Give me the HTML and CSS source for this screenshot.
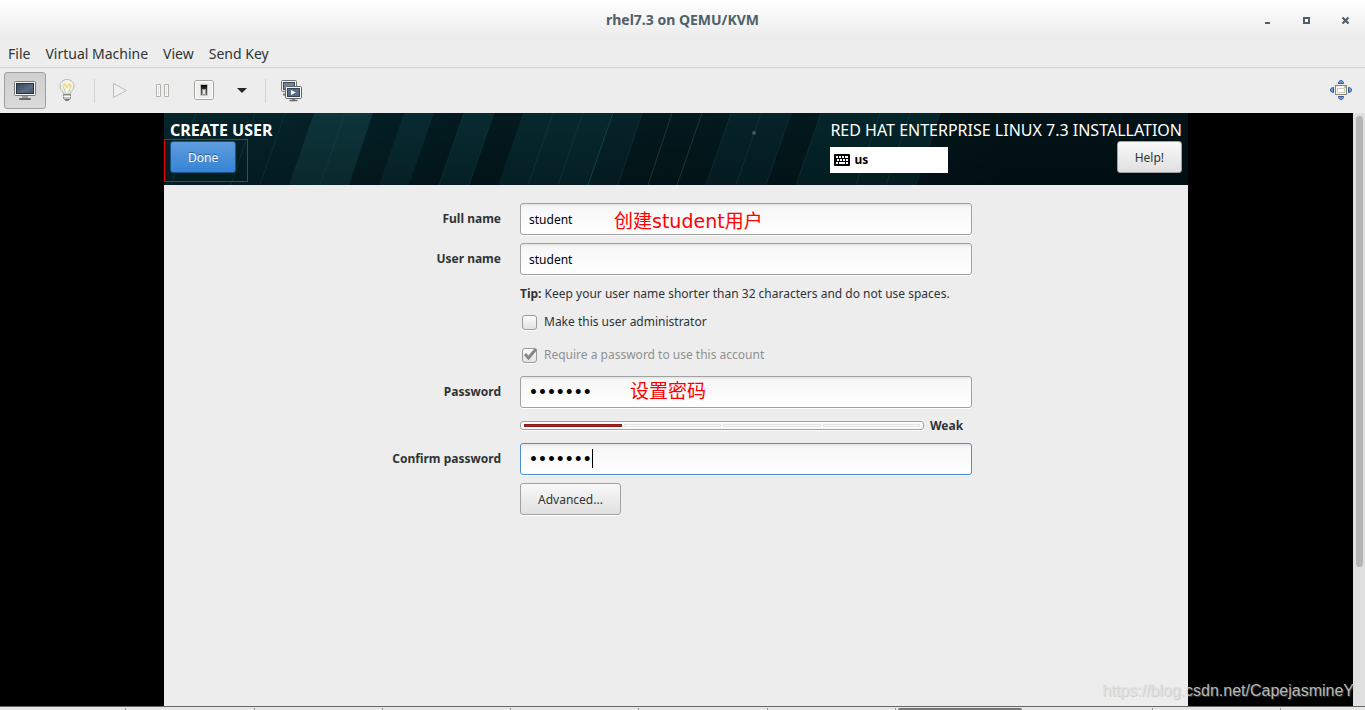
FILE: index.html
```html
<!DOCTYPE html>
<html lang="en">
<head>
<meta charset="utf-8">
<title>rhel7.3 on QEMU/KVM</title>
<link rel="stylesheet" href="styles.css">
</head>
<body>
<header class="titlebar">
  <h1 class="window-title">rhel7.3 on QEMU/KVM</h1>
  <div class="window-buttons">
    <button class="window-button" aria-label="Minimize"><svg width="9" height="9"><path d="M2 6h5v2H2z" fill="#4b5f66"/></svg></button>
    <button class="window-button" aria-label="Maximize"><svg width="9" height="9"><path d="M2 2h5v5H2z" fill="#fff" stroke="#4b5f66" stroke-width="2"/></svg></button>
    <button class="window-button" aria-label="Close"><svg width="9" height="9"><path d="M1.500 1.500l6 6M7.500 1.500l-6 6" stroke="#4b5f66" stroke-width="2.200"/></svg></button>
  </div>
</header>
<nav class="menubar">
  <button class="menu">File</button>
  <button class="menu">Virtual Machine</button>
  <button class="menu">View</button>
  <button class="menu">Send Key</button>
</nav>
<div class="toolbar">
  <button class="tool active" aria-label="Show the graphical console">
    <svg width="24" height="24" viewBox="0 0 24 24"><defs><linearGradient id="scr" x2="1" y2="1"><stop offset="0" stop-color="#36465b"/><stop offset=".6" stop-color="#5b6b82"/><stop offset="1" stop-color="#41516a"/></linearGradient></defs><rect x="1.500" y="2.500" width="21" height="14" rx="1" fill="#f4f4f2" stroke="#777a76"/><rect x="3.500" y="4.500" width="17" height="10" fill="url(#scr)" stroke="#26303d"/><path d="M9 17h6v2H9z" fill="#999"/><path d="M6.500 19.500h11v1h-11z" fill="#ddd" stroke="#666"/></svg>
  </button>
  <button class="tool" aria-label="Show virtual hardware details">
    <svg width="24" height="24" viewBox="0 0 24 24"><path d="M12 .5c-4 0-7 3-7 6.500 0 3 2 4.500 3 6l.5 2h7l.5-2c1-1.500 3-3 3-6 0-3.500-3-6.500-7-6.500z" fill="#f3f3ec" stroke="#b4b6b0"/><path d="M10.500 14l-2-6M13.500 14l2-6" fill="none" stroke="#c4c4b8"/><path d="M7.500 7.500l2-2L12 8l2.500-2.500 2 2" fill="none" stroke="#f3df85" stroke-width="2"/><path d="M8.500 15.500h7v4l-2 1.500h-3l-2-1.500z" fill="#c4c6c1" stroke="#888a85"/><path d="M8.500 17.500h7" stroke="#fff"/><path d="M10 20.500h4v1h-4z" fill="#444"/></svg>
  </button>
  <span class="divider"></span>
  <button class="tool" aria-label="Run">
    <svg width="24" height="24" viewBox="0 0 24 24"><path d="M5.500 4.500v14l13-7z" fill="#f0f0ef" stroke="#bdbdba" stroke-linejoin="round"/></svg>
  </button>
  <button class="tool" aria-label="Pause">
    <svg width="24" height="24" viewBox="0 0 24 24"><path d="M6.500 5.500h4v12h-4zM14.500 5.500h4v12h-4z" fill="#fafafa" stroke="#b1b1ad"/><path d="M8.500 7v9M16.500 7v9" stroke="#dededc"/></svg>
  </button>
  <button class="tool" aria-label="Shut down">
    <svg width="24" height="24" viewBox="0 0 24 24"><defs><linearGradient id="sw" x2="0" y2="1"><stop offset="0"/><stop offset="1" stop-color="#777"/></linearGradient></defs><rect x="2.500" y="1.500" width="19" height="19" rx="2" fill="#efefee" stroke="#a2a49f"/><rect x="3.500" y="2.500" width="17" height="17" rx="1" fill="none" stroke="#fff"/><rect x="8.500" y="5.500" width="7" height="11" rx="1" fill="url(#sw)" stroke="#c4c4c4"/><rect x="10.500" y="10.500" width="3" height="5" fill="#e4e4e4" stroke="#999"/></svg>
  </button>
  <button class="tool narrow" aria-label="Shut down options">
    <svg width="12" height="12" viewBox="0 0 12 12"><path d="M1 3h10L6 8z" fill="#232829"/></svg>
  </button>
  <span class="divider"></span>
  <button class="tool" aria-label="Manage snapshots">
    <svg width="24" height="24" viewBox="0 0 24 24"><rect x="2.500" y="1.500" width="15" height="11" rx="1" fill="#f2f2f0" stroke="#72756f"/><rect x="4.500" y="3.500" width="11" height="7" fill="#71829a" stroke="#39475a"/><path d="M4 15.500h5" stroke="#777" stroke-width="2"/><rect x="6.500" y="7.500" width="16" height="12" rx="1" fill="#f2f2f0" stroke="#666963"/><rect x="8.500" y="9.500" width="12" height="8" fill="#596b85" stroke="#354356"/><path d="M12 11v5l5-2.500z" fill="#fff"/><path d="M13 20h3v1h-3z" fill="#888"/><path d="M10.500 21.500h8" stroke="#666" stroke-width="1.500"/></svg>
  </button>
  <button class="tool fullscreen" aria-label="Resize to VM">
    <svg width="24" height="24" viewBox="0 0 24 24"><g fill="#739bd0" stroke="#31599b"><path d="M9.500 4.500c0-4 5-4 5 0zM9.500 17.500c0 4 5 4 5 0zM4.500 8.500c-4 0-4 5 0 5zM19.500 8.500c4 0 4 5 0 5z"/></g><rect x="6.500" y="6.500" width="11" height="9" fill="#f5f5f1" stroke="#858778"/><path d="M8.500 9.500h7v4h-7z" fill="#fff" stroke="#cbccc0"/><path d="M15 8h2" stroke="#858778"/></svg>
  </button>
</div>
<main class="console">
  <div class="display">
    <section class="guest">
      <header class="banner">
        <svg class="banner-art" viewBox="0 0 1024 72" preserveAspectRatio="none" aria-hidden="true">
          <defs>
            <linearGradient id="base" x2="1"><stop offset="0" stop-color="#05252a"/><stop offset=".12" stop-color="#042329"/><stop offset=".3" stop-color="#021a1f"/><stop offset=".7" stop-color="#03191e"/><stop offset=".82" stop-color="#021317"/><stop offset="1" stop-color="#021317"/></linearGradient>
            <linearGradient id="shade" y2="1" x2="0"><stop offset="0" stop-color="#000" stop-opacity="0"/><stop offset="1" stop-color="#000" stop-opacity=".25"/></linearGradient>
          </defs>
          <path fill="url(#base)" d="M0 0h1024v72H0z"/>
          <path fill="#0d353b" d="M150 0h59l-24 72h-60z"/>
          <path fill="#072b31" d="M240 0h30l-25 72h-30zM300 0h30l-25 72h-30z"/>
          <path fill="#06292e" d="M359 0h90l-25 72h-90z"/>
          <path fill="#052329" d="M449 0h29l-24 72h-30zM567 0h60l-25 72h-60z"/>
          <path fill="#04262b" d="M657 0h119l-25 72H632z"/>
          <path fill="url(#shade)" d="M0 0h1024v72H0z"/>
          <g fill="none" stroke="#164850" stroke-opacity=".4"><path d="M32 0L7 72M91 0L67 72M121 0L96 72M181 0l-25 72M300 0l-25 72M330 0l-25 72M389 0l-25 72M419 0l-25 72M478 0l-24 72M567 0l-25 72M597 0l-25 72M627 0l-25 72M657 0l-25 72M716 0l-24 72M746 0l-24 72M776 0l-24 72"/></g>
          <path d="M449 0l-25 72" stroke="#14535b" stroke-opacity=".7"/>
          <path d="M508 0l-24 72M538 0l-25 72" stroke="#3b4548" stroke-opacity=".6"/>
          <circle cx="590" cy="20" r="2" fill="#43575b"/>
        </svg>
        <div class="banner-side">
          <h2 class="screen-title">CREATE USER</h2>
          <button class="btn primary">Done</button>
          <span class="highlight"></span>
        </div>
        <div class="banner-side product">
          <p class="product-name">RED HAT ENTERPRISE LINUX 7.3 INSTALLATION</p>
          <div class="product-row">
            <button class="keyboard">
              <svg width="16" height="12" viewBox="0 0 16 12"><rect width="16" height="12" rx="1"/><path d="M2 2h2v2H2zM5 2h2v2H5zM8 2h2v2H8zM11 2h3v2h-3zM3 5h2v2H3zM6 5h2v2H6zM9 5h2v2H9zM12 5h2v2h-2zM2 8h2v2H2zM5 8h6v2H5zM12 8h2v2h-2z" fill="#fff"/></svg>
              us
            </button>
            <button class="btn">Help!</button>
          </div>
        </div>
      </header>
      <form class="form">
        <label class="label" for="full">Full name</label>
        <div class="field"><input class="entry" id="full" type="text" value="student"><span class="note note-user">创建student用户</span></div>
        <label class="label" for="user">User name</label>
        <div class="field"><input class="entry" id="user" type="text" value="student"></div>
        <p class="tip"><b>Tip:</b> Keep your user name shorter than 32 characters and do not use spaces.</p>
        <label class="check"><input class="box" type="checkbox">Make this user administrator</label>
        <label class="check disabled"><input class="box" type="checkbox" checked disabled>Require a password to use this account<svg class="tick" width="16" height="16" viewBox="0 0 16 16"><path d="M3 8l3.500 4L14 3" fill="none" stroke="#858888" stroke-width="3"/></svg></label>
        <label class="label" for="pass">Password</label>
        <div class="field"><input class="entry secret" id="pass" type="password" value="student"><span class="note note-pass">设置密码</span></div>
        <div class="strength">
          <div class="meter"><span class="segment filled"></span><span class="segment"></span><span class="segment"></span><span class="segment"></span></div>
          <b>Weak</b>
        </div>
        <label class="label" for="confirm">Confirm password</label>
        <div class="field"><input class="entry secret focused" id="confirm" type="password" value="student"><span class="caret"></span></div>
        <button class="btn advanced" type="button">Advanced...</button>
      </form>
    </section>
  </div>
  <div class="scrollbar"><div class="thumb"></div></div>
  <span class="watermark">https://blog.csdn.net/CapejasmineY</span>
</main>
<footer class="taskbar">
  <span class="task"></span><span class="task"></span><span class="task"></span><span class="task"></span><span class="task"></span><span class="task"></span><span class="task"></span><span class="task current"></span><span class="task"></span><span class="task"></span>
</footer>
</body>
</html>
```

FILE: styles.css
```css
* { box-sizing: border-box; }
body {
  margin: 0;
  min-height: 100vh;
  display: flex;
  flex-direction: column;
  background: #ededed;
  color: #2e3436;
  font: 13px/18px "Noto Sans", "Open Sans", "Noto Sans CJK SC", sans-serif;
}
h1, h2, p { margin: 0; }
button { font: inherit; color: inherit; margin: 0; padding: 0; border: 0; background: none; }
svg { display: block; }

.titlebar {
  display: grid;
  grid-template-columns: 1fr auto 1fr;
  align-items: center;
  height: 40px;
  padding-right: 15px;
  background: linear-gradient(#fff, #ededed 90%);
}
.window-title { grid-column: 2; padding-left: 15px; font-size: 14px; font-weight: 700; color: #4f6168; }
.window-buttons { display: flex; justify-content: flex-end; gap: 30px; }
.window-button { display: block; }

.menubar {
  display: flex;
  align-items: center;
  gap: 15px;
  height: 28px;
  padding: 0 8px;
  border-bottom: 1px solid #d4d4d4;
}
.menu { font-size: 14px; }

.toolbar { display: flex; align-items: center; height: 45px; padding: 0 3px 0 4px; }
.tool {
  display: flex;
  align-items: center;
  justify-content: center;
  width: 42px;
  height: 37px;
  border: 1px solid transparent;
  border-radius: 3px;
}
.tool.active { background: linear-gradient(#cfcfcf, #dadada); border-color: #a0a0a0; }
.tool.narrow { width: 34px; }
.divider { width: 1px; height: 24px; margin: 0 4px 0 6px; background: #d2d2d2; }
.fullscreen { margin-left: auto; }

.console { position: relative; flex: 1; display: flex; background: #000; }
.display { flex: 1; display: flex; justify-content: center; padding-right: 1px; }
.guest { width: 100%; max-width: 1024px; background: #ededed; }
.scrollbar { width: 12px; padding: 3px 2px 0 3px; background: #e0e0e0; }
.thumb { height: 76.5%; border-radius: 4px; background: #b5b5b5; }
.watermark {
  position: absolute;
  right: 11px;
  bottom: 5px;
  font: 16px/20px "Liberation Sans", Arial, sans-serif;
  color: rgba(225, 225, 225, .8);
  text-shadow: 1px 1px 1px rgba(150, 150, 150, .4);
}

.banner {
  position: relative;
  display: flex;
  justify-content: space-between;
  height: 72px;
  padding: 6px 6px 0;
}
.banner-art { position: absolute; inset: 0; width: 100%; height: 100%; }
.banner-side { position: relative; }
.screen-title, .product-name { font-size: 16px; line-height: 22px; color: #fff; }
.product-name { font-weight: 400; }
.highlight {
  position: absolute;
  left: -6px;
  top: 20px;
  width: 84px;
  height: 43px;
  border: 1px solid #e00;
}
.product-row { display: flex; justify-content: space-between; align-items: flex-start; }
.keyboard {
  display: flex;
  align-items: center;
  gap: 4px;
  width: 118px;
  height: 26px;
  margin-top: 6px;
  padding: 0 4px;
  background: #fff;
  color: #000;
  font-size: 12px;
  font-weight: 700;
}
.btn {
  height: 32px;
  padding: 1px 17px 0;
  border: 1px solid #a1a1a1;
  border-radius: 3px;
  background: linear-gradient(#f9f9f9, #e0e0e0);
  box-shadow: 0 1px #fff;
  font-size: 12px;
}
.banner .btn { box-shadow: none; }
.btn.primary {
  border-color: #1c5187;
  background: linear-gradient(#5f9ddd, #3583d5);
  color: #fff;
  text-shadow: 0 -1px #2a5f97;
}

.form {
  display: grid;
  grid-template-columns: 337px minmax(0, 452px);
  column-gap: 19px;
  row-gap: 8px;
  align-items: center;
  padding-top: 18px;
  font-size: 12px;
}
.label { text-align: right; font-weight: 700; }
.field { position: relative; }
.entry {
  display: block;
  width: 100%;
  height: 32px;
  padding: 0 8px;
  border: 1px solid #a1a1a1;
  border-radius: 3px;
  background: linear-gradient(#e4e4e4, #f7f7f7 3px, #fff);
  box-shadow: 0 1px #fff;
  color: #000;
  font: inherit;
  outline: 0;
}
.secret { font: 700 14px "DejaVu Sans", sans-serif; }
.entry.focused { border-color: #4a90d9; }
.note {
  position: absolute;
  top: 5px;
  color: #f00;
  font: 19px/26px "DejaVu Sans", "Noto Sans CJK SC", sans-serif;
}
.note-user { left: 94px; }
.note-pass { left: 110px; top: 2px; }
.caret { position: absolute; left: 72px; top: 6px; width: 1px; height: 19px; background: #000; }
.tip, .check, .strength, .advanced { grid-column: 2; }
.tip { margin-top: 2px; white-space: nowrap; }
.check { position: relative; display: flex; align-items: center; gap: 7px; height: 22px; padding-left: 2px; }
.check.disabled { margin: 3px 0 2px; color: #8e9192; }
.box {
  appearance: none;
  width: 15px;
  height: 15px;
  margin: 0;
  border: 1px solid #9b9b9b;
  border-radius: 3px;
  background: linear-gradient(#fbfbfb, #e2e2e2);
  box-shadow: 0 1px #fff;
}
.tick { position: absolute; left: 2px; top: 2px; }
.strength { display: flex; align-items: center; gap: 6px; height: 19px; }
.meter {
  display: flex;
  flex: 1;
  gap: 2px;
  max-width: 404px;
  height: 9px;
  padding: 2px 3px;
  border: 1px solid #a1a1a1;
  border-radius: 3px;
  background: #fafafa;
  box-shadow: 0 1px #fff;
}
.segment { flex: 1; border: 1px solid #e3e3e3; }
.segment.filled { border-color: #8f1a1a; background: #f00; }
.advanced { justify-self: start; }

.taskbar { display: flex; height: 4px; padding-top: 1px; border-top: 1px solid #666; background: #e6e6e6; overflow: hidden; }
.task { flex: 0 0 9.4%; border-right: 1px solid #999; }
.task:first-child { margin-left: -2px; }
.task.current { padding: 0 2px; border: 0; }
.task.current::before { content: ""; display: block; height: 2px; border-radius: 2px 2px 0 0; background: #777; }
```
